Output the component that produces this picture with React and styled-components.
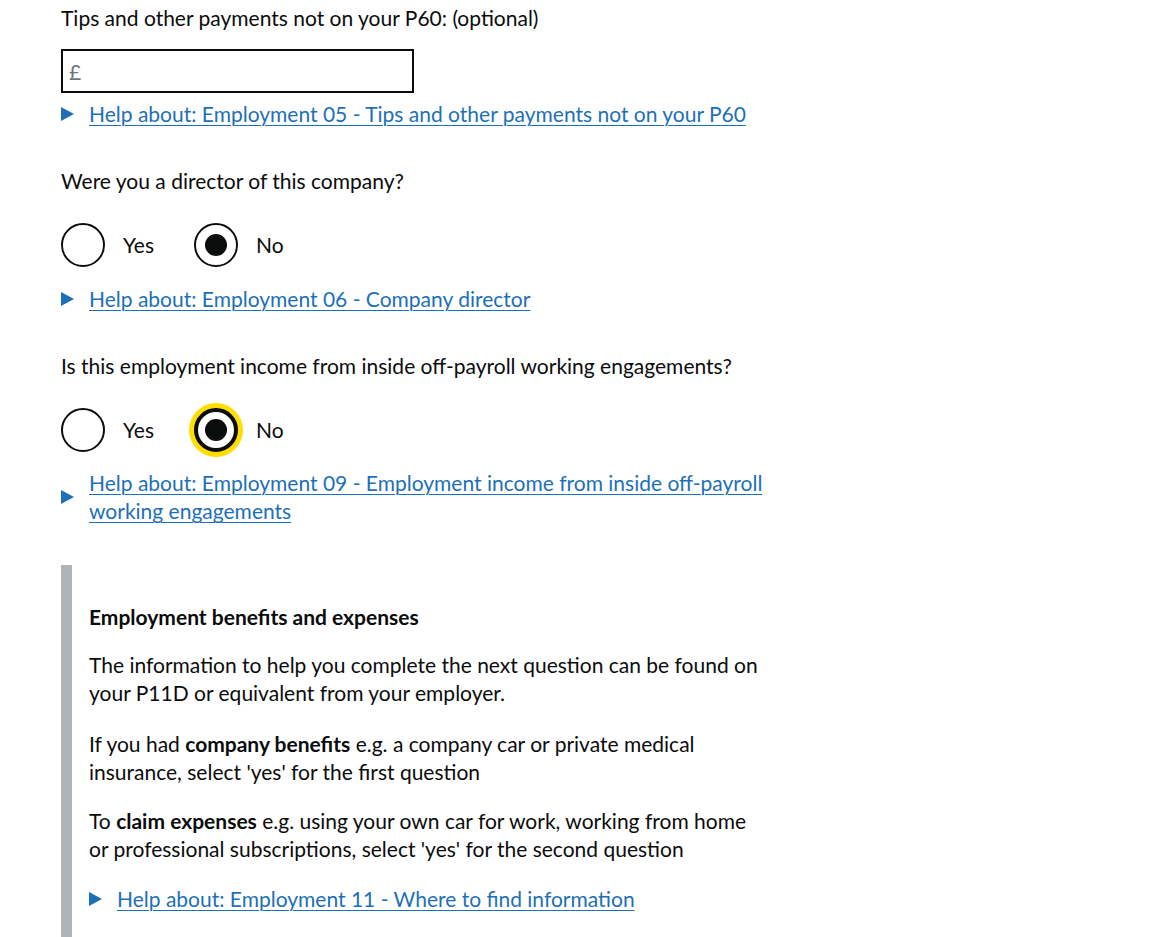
import React from "react";
import styled, { createGlobalStyle, css } from "styled-components";

const GlobalStyle = createGlobalStyle`
  * { box-sizing: border-box; }
  body {
    margin: 0;
    background: #ffffff;
    color: #0b0c0c;
    font-family: Lato, "Noto Sans", Arial, sans-serif;
    font-size: 21px;
    line-height: 28px;
  }
`;

const Page = styled.main`
  width: 771px;
  padding: 4px 0 0 61px;
`;

const FormGroup = styled.div`
  margin-bottom: 39px;
`;

const Label = styled.label`
  display: block;
  margin-bottom: 17px;
`;

const Input = styled.input`
  display: block;
  width: 353px;
  height: 44px;
  padding: 5px 6px;
  border: 2px solid #0b0c0c;
  border-radius: 0;
  font: inherit;
  color: #0b0c0c;
  &::placeholder { color: #6f777b; opacity: 1; }
`;

const Fieldset = styled.fieldset`
  margin: 0;
  padding: 0;
  border: 0;
`;

const Legend = styled.legend`
  padding: 0;
  margin-bottom: 28px;
`;

const Radios = styled.div`
  display: flex;
`;

const RadioItem = styled.label`
  display: flex;
  align-items: center;
  margin-right: 24px;
  cursor: pointer;
`;

const HiddenInput = styled.input`
  position: absolute;
  opacity: 0;
  width: 1px;
  height: 1px;
  margin: 0;
`;

const RadioMark = styled.span`
  position: relative;
  width: 44px;
  height: 44px;
  border: 2px solid #0b0c0c;
  border-radius: 50%;
  background: #ffffff;
  ${p => p.$focused && css`
    border-width: 4px;
    box-shadow: 0 0 0 5px #ffdd00;
  `}
  &::after {
    content: "";
    position: absolute;
    left: 50%;
    top: 50%;
    width: 22px;
    height: 22px;
    margin: -11px 0 0 -11px;
    border-radius: 50%;
    background: #0b0c0c;
    opacity: ${p => (p.$checked ? 1 : 0)};
  }
`;

const RadioText = styled.span`
  padding: 0 16px 0 18px;
`;

const Details = styled.details`
  margin-top: ${p => p.$top ?? 17}px;
`;

const Summary = styled.summary`
  display: flex;
  align-items: center;
  gap: 15px;
  list-style: none;
  cursor: pointer;
  &::-webkit-details-marker { display: none; }
  &::before {
    content: "";
    flex: none;
    width: 0;
    height: 0;
    border-left: 13px solid #1d70b8;
    border-top: 7px solid transparent;
    border-bottom: 7px solid transparent;
  }
`;

const SummaryText = styled.span`
  color: #1d70b8;
  text-decoration: underline;
  text-decoration-thickness: 1px;
  text-underline-offset: 3px;
`;

const Inset = styled.div`
  margin-top: 40px;
  padding: 38px 8px 40px 17px;
  border-left: 11px solid #b1b4b6;
`;

const InsetHeading = styled.h2`
  margin: 0 0 20px;
  font-size: 21px;
  line-height: 28px;
  font-weight: 700;
`;

const Para = styled.p`
  margin: 0 0 ${p => p.$bottom ?? 22}px;
`;

function Help({ children, top }) {
  return (
    <Details $top={top}>
      <Summary>
        <SummaryText>{children}</SummaryText>
      </Summary>
    </Details>
  );
}

function YesNo({ name, focused }) {
  return (
    <Radios>
      <RadioItem>
        <HiddenInput type="radio" name={name} value="yes" />
        <RadioMark />
        <RadioText>Yes</RadioText>
      </RadioItem>
      <RadioItem>
        <HiddenInput type="radio" name={name} value="no" defaultChecked />
        <RadioMark $checked $focused={focused} />
        <RadioText>No</RadioText>
      </RadioItem>
    </Radios>
  );
}

export default function App() {
  return (
    <>
      <GlobalStyle />
      <Page>
        <FormGroup>
          <Label htmlFor="tips">Tips and other payments not on your P60: (optional)</Label>
          <Input id="tips" type="text" placeholder="£" />
          <Help top={7}>Help about: Employment 05 - Tips and other payments not on your P60</Help>
        </FormGroup>

        <FormGroup>
          <Fieldset>
            <Legend>Were you a director of this company?</Legend>
            <YesNo name="director" />
          </Fieldset>
          <Help top={18}>Help about: Employment 06 - Company director</Help>
        </FormGroup>

        <Fieldset>
          <Legend>Is this employment income from inside off-payroll working engagements?</Legend>
          <YesNo name="offPayroll" focused />
        </Fieldset>
        <Help top={17}>
          Help about: Employment 09 - Employment income from inside off-payroll working engagements
        </Help>

        <Inset>
          <InsetHeading>Employment benefits and expenses</InsetHeading>
          <Para $bottom={23}>
            The information to help you complete the next question can be found on your P11D or
            equivalent from your employer.
          </Para>
          <Para $bottom={21}>
            If you had <strong>company benefits</strong> e.g. a company car or private medical
            insurance, select 'yes' for the first question
          </Para>
          <Para>
            To <strong>claim expenses</strong> e.g. using your own car for work, working from home or
            professional subscriptions, select 'yes' for the second question
          </Para>
          <Help top={0}>Help about: Employment 11 - Where to find information</Help>
        </Inset>
      </Page>
    </>
  );
}
